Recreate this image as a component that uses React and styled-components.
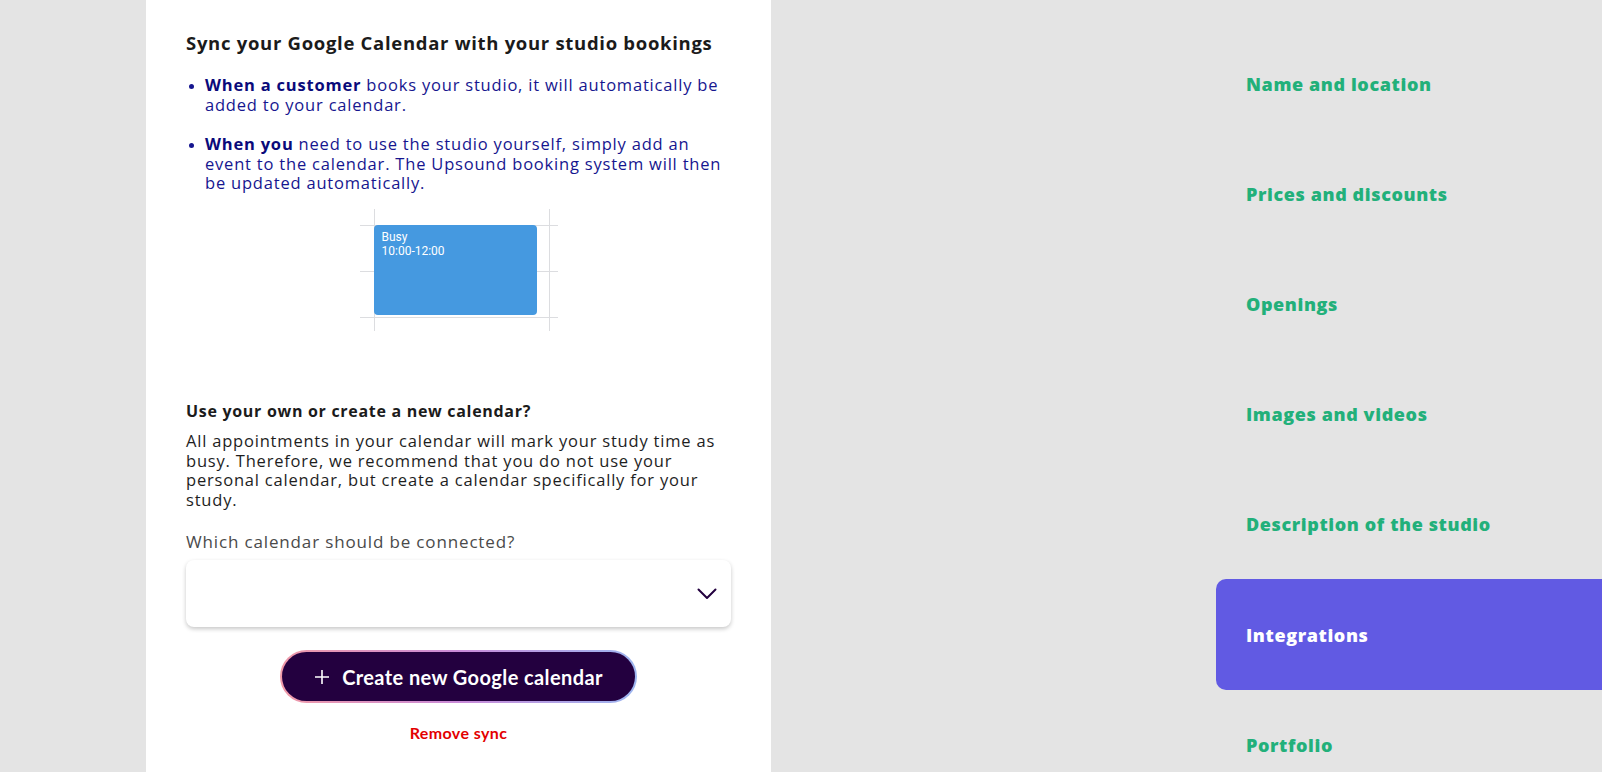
import React from "react";
import styled, { createGlobalStyle } from "styled-components";

const GlobalStyle = createGlobalStyle`
	html, body {
		margin: 0;
		padding: 0;
		background: #e4e4e4;
		font-family: "Open Sans", "Liberation Sans", sans-serif;
	}
`;

const Page = styled.div`
	display: flex;
	flex-direction: row;
	align-items: stretch;
	min-height: 772px;
	padding-left: 146px;
	overflow: hidden;
`;

const Panel = styled.section`
	width: 625px;
	box-sizing: border-box;
	background: #ffffff;
	padding: 32px 40px 30px 40px;
	display: flex;
	flex-direction: column;
`;

const Title = styled.h2`
	margin: 0;
	font-size: 18.5px;
	line-height: 22px;
	font-weight: 700;
	letter-spacing: 0.7px;
	color: #1b1b1b;
`;

const BulletList = styled.ul`
	margin: 21px 0 0 0;
	padding-left: 19px;
	color: #16168f;
	font-size: 16.5px;
	line-height: 19.6px;
	letter-spacing: 0.8px;
`;

const Bullet = styled.li`
	margin-bottom: 20px;
	&:last-child {
		margin-bottom: 0;
	}
	&::marker {
		font-size: 13px;
	}
	strong {
		font-weight: 700;
		color: #0a0a7a;
	}
`;

const Sketch = styled.div`
	align-self: center;
	margin-top: 16px;
	width: 198px;
	height: 122px;
	box-sizing: border-box;
	padding: 16px 0 0 14px;
	background:
		linear-gradient(#dcdde0, #dcdde0) 14px 0 / 1px 100% no-repeat,
		linear-gradient(#dcdde0, #dcdde0) 189px 0 / 1px 100% no-repeat,
		linear-gradient(#dcdde0, #dcdde0) 0 16px / 100% 1px no-repeat,
		linear-gradient(#dcdde0, #dcdde0) 0 62px / 100% 1px no-repeat,
		linear-gradient(#dcdde0, #dcdde0) 0 108px / 100% 1px no-repeat;
`;

const EventBlock = styled.div`
	width: 163px;
	height: 90px;
	box-sizing: border-box;
	background: #4599e0;
	border-radius: 4px;
	padding: 5px 8px;
	color: #ffffff;
	font-family: Roboto, "Liberation Sans", sans-serif;
	font-size: 12px;
	line-height: 14.5px;
`;

const SubTitle = styled.h3`
	margin: 70px 0 0 0;
	font-size: 16px;
	line-height: 20px;
	font-weight: 700;
	letter-spacing: 0.7px;
	color: #1b1b1b;
`;

const Paragraph = styled.p`
	margin: 10px 0 0 0;
	font-size: 16.5px;
	line-height: 19.6px;
	letter-spacing: 0.8px;
	color: #1e1e1e;
`;

const FieldLabel = styled.label`
	display: block;
	margin-top: 23px;
	font-size: 17px;
	line-height: 20px;
	letter-spacing: 0.85px;
	color: #4a4a4a;
`;

const Select = styled.div`
	margin-top: 8px;
	height: 67px;
	border-radius: 8px;
	background: #ffffff;
	box-shadow: 0 2px 4px rgba(0, 0, 0, 0.22);
	display: flex;
	align-items: center;
	justify-content: flex-end;
	padding-right: 14px;
`;

const CreateButton = styled.button`
	align-self: center;
	margin-top: 23px;
	width: 357px;
	height: 53px;
	border-radius: 27px;
	border: 2px solid transparent;
	background:
		linear-gradient(#23003f, #23003f) padding-box,
		linear-gradient(90deg, #f09aa8, #c98ad8 50%, #9db6f0) border-box;
	color: #ffffff;
	font-family: Lato, "Open Sans", sans-serif;
	font-size: 20px;
	font-weight: 700;
	letter-spacing: 0.4px;
	display: flex;
	align-items: center;
	justify-content: center;
	gap: 12px;
	cursor: pointer;
`;

const RemoveLink = styled.a`
	align-self: center;
	margin-top: 21px;
	font-family: Lato, "Open Sans", sans-serif;
	font-size: 16px;
	line-height: 18px;
	font-weight: 700;
	letter-spacing: 0.4px;
	color: #e30000;
	cursor: pointer;
`;

const Nav = styled.nav`
	margin-left: auto;
	width: 386px;
	padding-top: 28.5px;
	display: flex;
	flex-direction: column;
`;

const NavItem = styled.div`
	height: 110.2px;
	flex-shrink: 0;
	display: flex;
	align-items: center;
	padding-left: 30px;
	border-radius: 10px 0 0 10px;
	font-size: 18px;
	font-weight: 800;
	letter-spacing: 0.6px;
	color: ${props => (props.active ? "#ffffff" : "#22b07a")};
	background: ${props => (props.active ? "#615ae3" : "transparent")};
`;

const navItems = [
	"Name and location",
	"Prices and discounts",
	"Openings",
	"Images and videos",
	"Description of the studio",
	"Integrations",
	"Portfolio"
];

const Chevron = () => (
	<svg width="20" height="12" viewBox="0 0 20 12" fill="none">
		<path d="M1.5 1.5 L10 10 L18.5 1.5" stroke="#23003f" strokeWidth="2" strokeLinecap="round" strokeLinejoin="round" />
	</svg>
);

const Plus = () => (
	<svg width="16" height="16" viewBox="0 0 16 16" fill="none">
		<path d="M8 1 V15 M1 8 H15" stroke="#ffffff" strokeWidth="1.6" />
	</svg>
);

export default function App() {
	return (
		<>
			<GlobalStyle />
			<Page>
				<Panel>
					<Title>Sync your Google Calendar with your studio bookings</Title>
					<BulletList>
						<Bullet>
							<strong>When a customer</strong> books your studio, it will automatically be added to your calendar.
						</Bullet>
						<Bullet>
							<strong>When you</strong> need to use the studio yourself, simply add an event to the calendar. The Upsound booking system will then be updated automatically.
						</Bullet>
					</BulletList>

					<Sketch>
						<EventBlock>
							<div>Busy</div>
							<div>10:00-12:00</div>
						</EventBlock>
					</Sketch>

					<SubTitle>Use your own or create a new calendar?</SubTitle>
					<Paragraph>
						All appointments in your calendar will mark your study time as busy. Therefore, we recommend that you do not use your personal calendar, but create a calendar specifically for your study.
					</Paragraph>

					<FieldLabel>Which calendar should be connected?</FieldLabel>
					<Select>
						<Chevron />
					</Select>

					<CreateButton>
						<Plus />
						Create new Google calendar
					</CreateButton>
					<RemoveLink>Remove sync</RemoveLink>
				</Panel>

				<Nav>
					{navItems.map(item => (
						<NavItem key={item} active={item === "Integrations"}>
							{item}
						</NavItem>
					))}
				</Nav>
			</Page>
		</>
	);
}
